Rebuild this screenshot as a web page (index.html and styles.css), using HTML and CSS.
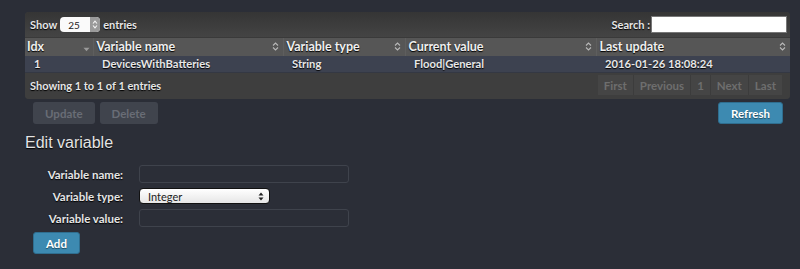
FILE: index.html
```html
<!DOCTYPE html>
<html lang="en">
<head>
  <meta charset="UTF-8" />
  <title>User variables</title>
  <link rel="stylesheet" href="styles.css">
</head>
<body>
  <div class="wrapper">
    <div class="top-bar">
      <label class="length">Show
        <span class="mini-select">25<span class="mini-arrow"><svg width="6" height="9" viewBox="0 0 6 9"><path d="M1 3.5 L3 1.2 L5 3.5 M1 5.5 L3 7.8 L5 5.5" fill="none" stroke="#f4f4f4" stroke-width="1.1"/></svg></span></span>
        entries</label>
      <label class="search">Search :<span class="search-input"></span></label>
    </div>

    <table class="grid">
      <thead>
        <tr>
          <th class="col-idx">Idx<span class="sort sort-desc"><svg width="7" height="5" viewBox="0 0 7 5"><path d="M0.5 0.8 L6.5 0.8 L3.5 4.2 Z" fill="currentColor"/></svg></span></th>
          <th class="col-name">Variable name<span class="sort"><svg width="7" height="9" viewBox="0 0 7 9"><path d="M1 3.5 L3.5 1 L6 3.5 M1 5.5 L3.5 8 L6 5.5" fill="none" stroke="currentColor" stroke-width="1.1"/></svg></span></th>
          <th class="col-type">Variable type<span class="sort"><svg width="7" height="9" viewBox="0 0 7 9"><path d="M1 3.5 L3.5 1 L6 3.5 M1 5.5 L3.5 8 L6 5.5" fill="none" stroke="currentColor" stroke-width="1.1"/></svg></span></th>
          <th class="col-value">Current value<span class="sort"><svg width="7" height="9" viewBox="0 0 7 9"><path d="M1 3.5 L3.5 1 L6 3.5 M1 5.5 L3.5 8 L6 5.5" fill="none" stroke="currentColor" stroke-width="1.1"/></svg></span></th>
          <th class="col-update">Last update<span class="sort"><svg width="7" height="9" viewBox="0 0 7 9"><path d="M1 3.5 L3.5 1 L6 3.5 M1 5.5 L3.5 8 L6 5.5" fill="none" stroke="currentColor" stroke-width="1.1"/></svg></span></th>
        </tr>
      </thead>
      <tbody>
        <tr>
          <td>1</td>
          <td>DevicesWithBatteries</td>
          <td>String</td>
          <td>Flood|General</td>
          <td>2016-01-26 18:08:24</td>
        </tr>
      </tbody>
    </table>

    <div class="bottom-bar">
      <div class="info">Showing 1 to 1 of 1 entries</div>
      <div class="paging">
        <span>First</span>
        <span>Previous</span>
        <span>1</span>
        <span>Next</span>
        <span>Last</span>
      </div>
    </div>
  </div>

  <div class="actions">
    <div class="left-actions">
      <button class="btn disabled">Update</button>
      <button class="btn disabled">Delete</button>
    </div>
    <button class="btn primary">Refresh</button>
  </div>

  <h2 class="edit-title">Edit variable</h2>

  <div class="edit-form">
    <label>Variable name:</label>
    <span class="text-input"></span>
    <label>Variable type:</label>
    <span class="type-select">Integer<svg width="6" height="9" viewBox="0 0 6 9"><path d="M0.5 3.5 L3 0.5 L5.5 3.5 Z M0.5 5.5 L3 8.5 L5.5 5.5 Z" fill="#222"/></svg></span>
    <label>Variable value:</label>
    <span class="text-input"></span>
  </div>

  <button class="btn primary add">Add</button>
</body>
</html>
```

FILE: styles.css
```css
* {
  box-sizing: border-box;
}

body {
  margin: 0;
  padding: 12px 10px 0 25px;
  background: #2b2e37;
  color: #e6e6e6;
  font-family: 'Lato', sans-serif;
  font-weight: 700;
  font-size: 11px;
  text-shadow: 0 1px 1px #000;
}

.wrapper {
  width: 765px;
  background: #3d3d3d;
  border-radius: 4px;
  overflow: hidden;
}

.top-bar {
  height: 25px;
  display: flex;
  justify-content: space-between;
  align-items: center;
  padding: 0 3px 0 5px;
  background: linear-gradient(#353535, #444);
}

.length {
  display: flex;
  align-items: center;
  gap: 3px;
}

.mini-select {
  display: inline-flex;
  align-items: center;
  justify-content: space-between;
  width: 40px;
  height: 15px;
  padding-left: 8px;
  background: #fafafa;
  border-radius: 4px;
  color: #222;
  font-weight: 400;
  font-size: 10px;
  text-shadow: none;
  overflow: hidden;
}

.mini-arrow {
  width: 10px;
  height: 100%;
  background: #9a9a9a;
  display: flex;
  align-items: center;
  justify-content: center;
}

.search {
  display: flex;
  align-items: center;
}

.search-input {
  width: 136px;
  height: 17px;
  margin-left: 1px;
  background: #fff;
  border: 1px solid #777;
}

.grid {
  width: 100%;
  border-collapse: collapse;
  table-layout: fixed;
}

.grid th {
  height: 18px;
  padding: 0 4px 0 3px;
  text-align: left;
  font-size: 12.5px;
  color: #f0f0f0;
  background: #565656;
  border-top: 1px solid #3a3a3a;
  border-left: 1px solid #5e5e5e;
  position: relative;
}

.grid th:first-child {
  border-left: none;
  padding-left: 2px;
}

.sort {
  position: absolute;
  right: 4px;
  top: 4px;
  color: #b8b8b8;
  line-height: 9px;
}

.sort-desc {
  right: 3px;
  top: 7px;
  line-height: 5px;
  color: #9a9a9a;
}

.col-idx { width: 68px; }
.col-name { width: 190px; }
.col-type { width: 122px; }
.col-value { width: 191px; }

.grid td {
  height: 17px;
  padding: 0 0 0 9px;
  background: #3d4250;
  color: #e8e8e8;
  font-size: 11.2px;
  border-bottom: 1px solid #343843;
}

.bottom-bar {
  height: 26px;
  display: flex;
  justify-content: space-between;
  align-items: center;
  padding: 0 8px 2px 5px;
  background: #3e3e3e;
}

.paging {
  display: flex;
  height: 20px;
  background: #454545;
}

.paging span {
  display: flex;
  align-items: center;
  padding: 0 6px;
  color: #6e6e6e;
  text-shadow: none;
  font-size: 11.5px;
  border-left: 1px solid #3c3c3c;
}

.paging span:first-child {
  border-left: none;
}

.actions {
  width: 758px;
  display: flex;
  justify-content: space-between;
  padding: 3px 0 0 8px;
}

.left-actions {
  display: flex;
  gap: 5px;
}

.btn {
  height: 22px;
  padding: 0 12px;
  border-radius: 3px;
  border: none;
  font-family: 'Lato', sans-serif;
  font-weight: 700;
  font-size: 11.5px;
}

.btn.disabled {
  background: #40444d;
  color: #696d76;
  text-shadow: none;
}

.btn.primary {
  background: #3d8ab1;
  color: #fff;
  border: 1px solid #2f6e8f;
  text-shadow: 0 1px 1px #1d4a60;
}

.edit-title {
  margin: 10px 0 0;
  font-family: 'Liberation Sans', Arial, sans-serif;
  font-weight: 400;
  font-size: 16px;
  color: #e4e4e4;
}

.edit-form {
  display: grid;
  grid-template-columns: 98px 210px;
  column-gap: 16px;
  row-gap: 5px;
  align-items: center;
  margin-top: 13px;
}

.edit-form label {
  text-align: right;
  font-size: 11.5px;
}

.text-input {
  height: 18px;
  border: 1px solid #3f434c;
  border-radius: 3px;
  background: #2b2e37;
}

.type-select {
  width: 131px;
  height: 16px;
  display: flex;
  align-items: center;
  justify-content: space-between;
  padding: 0 5px 0 8px;
  background: linear-gradient(#fff, #e6e6e6);
  border: 1px solid #111;
  border-radius: 4px;
  color: #222;
  font-weight: 400;
  font-size: 11px;
  text-shadow: none;
}

.add {
  margin: 5px 0 0 8px;
  padding: 0 12px;
}
```
